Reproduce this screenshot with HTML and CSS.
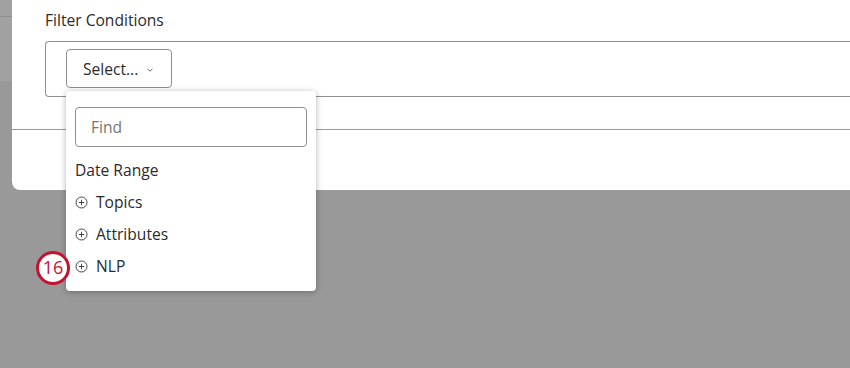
FILE: index.html
```html
<!DOCTYPE html>
<html>
<head>
<meta charset="utf-8">
<link rel="stylesheet" href="styles.css">
</head>
<body>
<div class="page">
  <div class="rail">
    <div class="rail-top"></div>
  </div>
  <div class="card">
    <div class="section">
      <div class="label">Filter Conditions</div>
      <div class="filter-box">
        <div class="select-wrap">
          <button class="select-btn">Select... <span class="chev"><svg width="8" height="6" viewBox="0 0 8 6"><path d="M1.5 1.8 L4 4.2 L6.5 1.8" fill="none" stroke="#666" stroke-width="1"/></svg></span></button>
          <div class="menu">
            <div class="find">Find</div>
            <div class="item plain">Date Range</div>
            <div class="item"><svg class="plus" width="13" height="13" viewBox="0 0 13 13"><circle cx="6.5" cy="6.5" r="5.5" fill="none" stroke="#444" stroke-width="1"/><path d="M6.5 3.8 V9.2 M3.8 6.5 H9.2" stroke="#444" stroke-width="1"/></svg>Topics</div>
            <div class="item"><svg class="plus" width="13" height="13" viewBox="0 0 13 13"><circle cx="6.5" cy="6.5" r="5.5" fill="none" stroke="#444" stroke-width="1"/><path d="M6.5 3.8 V9.2 M3.8 6.5 H9.2" stroke="#444" stroke-width="1"/></svg>Attributes</div>
            <div class="item"><svg class="plus" width="13" height="13" viewBox="0 0 13 13"><circle cx="6.5" cy="6.5" r="5.5" fill="none" stroke="#444" stroke-width="1"/><path d="M6.5 3.8 V9.2 M3.8 6.5 H9.2" stroke="#444" stroke-width="1"/></svg>NLP</div>
            <div class="badge">16</div>
          </div>
        </div>
      </div>
    </div>
    <div class="divider"></div>
    <div class="footer"></div>
  </div>
</div>
</body>
</html>
```
FILE: styles.css
```css
html, body {
  margin: 0;
  padding: 0;
  background: #999999;
  font-family: "Open Sans", "Liberation Sans", sans-serif;
  color: #2b2b2b;
  overflow: hidden;
}
.page {
  display: flex;
  width: 850px;
  height: 368px;
}
.rail {
  width: 12px;
  flex: none;
}
.rail-top {
  height: 80px;
  background: #a1a1a1;
  border-top: 1px solid transparent;
  position: relative;
}
.rail-top::after {
  content: "";
  position: absolute;
  left: 0;
  right: 0;
  top: 15px;
  height: 1px;
  background: #919191;
}
.card {
  flex: 1;
  height: 190px;
  background: #fff;
  border-bottom-left-radius: 8px;
  display: flex;
  flex-direction: column;
}
.section {
  padding: 10px 0 0 33px;
  height: 129px;
  box-sizing: border-box;
}
.label {
  font-size: 15.6px;
  line-height: 20px;
  color: #2b2b2b;
}
.filter-box {
  margin-top: 11px;
  height: 56px;
  box-sizing: border-box;
  border: 1px solid #8f8f8f;
  border-right: none;
  border-radius: 4px 0 0 4px;
  padding: 7px 0 0 20px;
}
.select-wrap {
  position: relative;
  width: 106px;
}
.select-btn {
  width: 106px;
  height: 39px;
  box-sizing: border-box;
  border: 1px solid #8f8f8f;
  border-radius: 4px;
  background: #fff;
  font-family: inherit;
  font-size: 15.6px;
  color: #2b2b2b;
  padding: 0 0 0 16px;
  text-align: left;
  display: flex;
  align-items: center;
  gap: 0;
}
.chev {
  margin-left: 8px;
  display: inline-flex;
  margin-top: 2px;
}
.menu {
  position: absolute;
  left: 0;
  top: 42px;
  width: 250px;
  height: 200px;
  box-sizing: border-box;
  background: #fff;
  border-radius: 4px;
  box-shadow: 0 1px 6px rgba(0,0,0,0.3);
  padding: 16px 9px 0 9px;
  z-index: 2;
}
.find {
  height: 40px;
  box-sizing: border-box;
  border: 1px solid #8f8f8f;
  border-radius: 4px;
  padding-left: 15px;
  font-size: 15.6px;
  line-height: 38px;
  color: #767676;
  margin-bottom: 7px;
}
.item {
  height: 32px;
  display: flex;
  align-items: center;
  font-size: 15.6px;
  color: #2b2b2b;
}
.plus {
  margin: 0 8px 0 0;
  flex: none;
}
.badge {
  position: absolute;
  left: -30px;
  top: 160px;
  width: 34px;
  height: 34px;
  box-sizing: border-box;
  border: 3px solid #c4122f;
  border-radius: 50%;
  background: #fff;
  color: #c4122f;
  font-size: 18px;
  line-height: 27px;
  text-align: center;
}
.divider {
  height: 1px;
  background: #9a9a9a;
}
.footer {
  flex: 1;
}
```
